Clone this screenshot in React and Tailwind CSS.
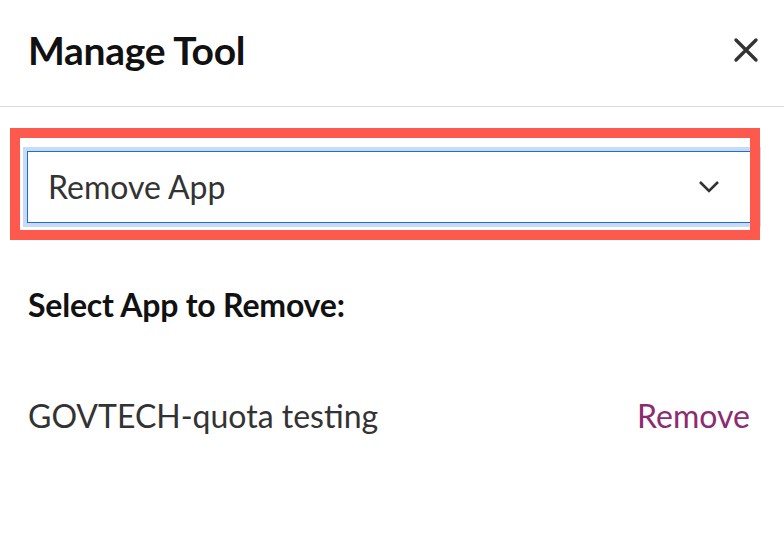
import React from 'react';

const App = () => {
  return (
    <div className="relative w-[784px] h-[548px] bg-white font-['Lato',sans-serif] overflow-hidden">
      {/* header */}
      <div className="flex items-center justify-between h-[107px] pb-[6px] pl-[28px] pr-[24px] border-b border-[#dcdcdc]">
        <h1 className="text-[39px] leading-[46px] font-bold text-[#111] tracking-[-0.3px]">Manage Tool</h1>
        <button className="w-[28px] h-[28px] flex items-center justify-center">
          <svg width="26" height="26" viewBox="0 0 26 26" fill="none">
            <path d="M3 3L23 23M23 3L3 23" stroke="#333" strokeWidth="3.4" strokeLinecap="round" />
          </svg>
        </button>
      </div>

      <div className="pl-[27px] pr-[27px] pt-[44px]">
        <div className="flex items-center justify-between h-[72px] pl-[20px] pr-[36px] border border-[#1b6fdc] shadow-[0_0_0_4px_#c7dbf7] bg-white">
          <span className="text-[32px] leading-[40px] text-[#333]">Remove App</span>
          <svg width="22" height="14" viewBox="0 0 22 14" fill="none">
            <path d="M2 2L11 11L20 2" stroke="#333" strokeWidth="2.6" />
          </svg>
        </div>

        <div className="mt-[62px] pl-[1px] text-[32px] leading-[40px] font-bold text-[#111] tracking-[-0.2px]">Select App to Remove:</div>

        <div className="mt-[71px] pl-[1px] pr-[7px] flex items-center justify-between text-[32px] leading-[40px]">
          <span className="text-[#333]">GOVTECH-quota testing</span>
          <button className="text-[#8d2a70]">Remove</button>
        </div>
      </div>

      {/* annotation box */}
      <div className="absolute left-[10px] top-[128px] w-[750px] h-[112px] border-[10px] border-[#fe594d]" />
    </div>
  );
};

export default App;
